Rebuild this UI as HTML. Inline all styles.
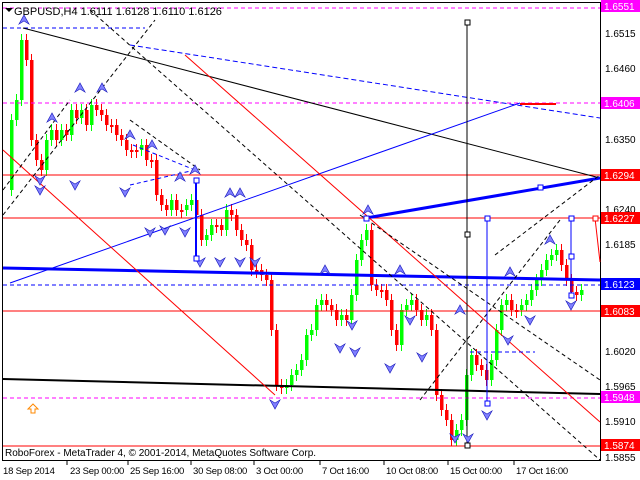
<!DOCTYPE html>
<html><head><style>
body{margin:0;background:#fff;width:640px;height:480px;overflow:hidden}
svg{display:block;font-family:"Liberation Sans",sans-serif}
</style></head><body>
<svg id="s" width="640" height="480" xmlns="http://www.w3.org/2000/svg">
<rect width="640" height="480" fill="#fff"/>
<rect x="2.5" y="2.5" width="598" height="458" fill="none" stroke="#000"/>
<g id="c"></g>
<g stroke-width="1">
<line x1="3" y1="8" x2="600" y2="8" stroke="#f0f" stroke-dasharray="4,3"/>
<line x1="3" y1="103" x2="600" y2="103" stroke="#f0f" stroke-dasharray="4,3"/>
<line x1="3" y1="398" x2="600" y2="398" stroke="#f0f" stroke-dasharray="4,3"/>
<line x1="3" y1="175" x2="600" y2="175" stroke="#f00"/>
<line x1="3" y1="218" x2="600" y2="218" stroke="#f00"/>
<line x1="3" y1="311" x2="600" y2="311" stroke="#f00"/>
<line x1="3" y1="446" x2="600" y2="446" stroke="#f00"/>
<line x1="3" y1="285" x2="600" y2="285" stroke="#00f" stroke-dasharray="4,3"/>
<line x1="3" y1="28" x2="145" y2="28" stroke="#00f" stroke-dasharray="4,3"/>
<line x1="520" y1="104" x2="556" y2="104" stroke="#f00" stroke-width="2"/>
</g>
<line x1="3" y1="268" x2="600" y2="280" stroke="#00f" stroke-width="3"/>
<line x1="3" y1="379" x2="600" y2="394" stroke="#000" stroke-width="2"/>
<line x1="23" y1="28" x2="600" y2="178" stroke="#000"/>
<line x1="130" y1="45" x2="600" y2="118" stroke="#00f" stroke-dasharray="5,3"/>
<line x1="10" y1="283" x2="520" y2="103" stroke="#00f"/>
<line x1="366" y1="218" x2="600" y2="178" stroke="#00f" stroke-width="3"/>
<line x1="185" y1="55" x2="600" y2="422" stroke="#f00"/>
<line x1="3" y1="150" x2="275" y2="395" stroke="#f00"/>
<g stroke="#000" stroke-dasharray="4,3" fill="none">
<line x1="3" y1="215" x2="155" y2="20"/>
<line x1="3" y1="190" x2="70" y2="100"/>
<line x1="90" y1="10" x2="600" y2="460"/>
<line x1="360" y1="215" x2="600" y2="380"/>
<line x1="420" y1="400" x2="560" y2="220"/>
<line x1="495" y1="255" x2="600" y2="175"/>
<line x1="130" y1="120" x2="200" y2="170"/>
</g>
<g stroke="#00f" stroke-dasharray="4,3"><line x1="130" y1="185" x2="195" y2="170"/><line x1="133" y1="145" x2="195" y2="170"/><line x1="470" y1="352" x2="535" y2="352"/></g>
<line x1="467" y1="22" x2="467" y2="445" stroke="#000"/>
<line x1="487" y1="218" x2="487" y2="403" stroke="#00f"/>
<line x1="571" y1="218" x2="571" y2="295" stroke="#00f"/>
<line x1="595" y1="218" x2="600" y2="262" stroke="#f00"/>
<line x1="196" y1="178" x2="196" y2="260" stroke="#00f" stroke-width="2"/>
<g id="f"></g>
<g fill="#fff" stroke-width="1">
<rect x="465" y="20" width="5" height="5" stroke="#000"/><rect x="465" y="232" width="5" height="5" stroke="#000"/>
<rect x="465" y="443" width="5" height="5" stroke="#000"/>
<rect x="485" y="216" width="5" height="5" stroke="#00f"/><rect x="485" y="401" width="5" height="5" stroke="#00f"/>
<rect x="569" y="216" width="5" height="5" stroke="#00f"/><rect x="569" y="254" width="5" height="5" stroke="#00f"/>
<rect x="569" y="293" width="5" height="5" stroke="#00f"/><rect x="593" y="216" width="5" height="5" stroke="#f00"/>
<rect x="538" y="185" width="5" height="5" stroke="#00f"/><rect x="194" y="178" width="5" height="5" stroke="#00f"/>
<rect x="194" y="256" width="5" height="5" stroke="#00f"/><rect x="364" y="216" width="5" height="5" stroke="#00f"/>
</g>
<text x="14" y="15" font-size="11" fill="#000">GBPUSD,H4  1.6111 1.6128 1.6110 1.6126</text>
<polygon points="5,8 13,8 9,12" fill="#000"/>
<text x="5" y="456" font-size="10" fill="#000">RoboForex - MetaTrader 4, © 2001-2014, MetaQuotes Software Corp.</text>
<path d="M33,404 l-5,5 h3 v4 h4 v-4 h3 z" fill="none" stroke="#f80"/>
<g font-size="10" fill="#000">
<text x="605" y="37">1.6515</text><text x="605" y="72">1.6460</text><text x="605" y="143">1.6350</text>
<text x="605" y="213">1.6240</text><text x="605" y="248">1.6185</text><text x="605" y="355">1.6020</text>
<text x="605" y="390">1.5965</text><text x="605" y="425">1.5910</text><text x="605" y="461">1.5855</text>
</g>
<g font-size="10">
<rect x="601" y="0" width="39" height="12" fill="#f0f"/><text x="604" y="10" fill="#fff">1.6551</text>
<rect x="601" y="97" width="39" height="12" fill="#f0f"/><text x="604" y="107" fill="#fff">1.6406</text>
<rect x="601" y="169" width="39" height="12" fill="#f00"/><text x="604" y="179" fill="#fff">1.6294</text>
<rect x="601" y="212" width="39" height="12" fill="#f00"/><text x="604" y="222" fill="#fff">1.6227</text>
<rect x="601" y="278" width="39" height="12" fill="#00f"/><text x="604" y="288" fill="#fff">1.6123</text>
<rect x="601" y="305" width="39" height="12" fill="#f00"/><text x="604" y="315" fill="#fff">1.6083</text>
<rect x="601" y="391" width="39" height="12" fill="#f0f"/><text x="604" y="401" fill="#fff">1.5948</text>
<rect x="601" y="439" width="39" height="12" fill="#f00"/><text x="604" y="449" fill="#fff">1.5874</text>
</g>
<g font-size="9.5" fill="#000" letter-spacing="-0.2">
<text x="3" y="474">18 Sep 2014</text><text x="70" y="474">23 Sep 00:00</text><text x="130" y="474">25 Sep 16:00</text>
<text x="193" y="474">30 Sep 08:00</text><text x="256" y="474">3 Oct 00:00</text><text x="322" y="474">7 Oct 16:00</text>
<text x="386" y="474">10 Oct 08:00</text><text x="450" y="474">15 Oct 00:00</text><text x="516" y="474">17 Oct 16:00</text>
</g>
<g stroke="#000"><line x1="67" y1="461" x2="67" y2="465"/><line x1="128" y1="461" x2="128" y2="465"/><line x1="191" y1="461" x2="191" y2="465"/><line x1="254" y1="461" x2="254" y2="465"/><line x1="320" y1="461" x2="320" y2="465"/><line x1="384" y1="461" x2="384" y2="465"/><line x1="448" y1="461" x2="448" y2="465"/><line x1="514" y1="461" x2="514" y2="465"/></g>
</svg>
<script>
var NS="http://www.w3.org/2000/svg";
function el(p,n,a){var e=document.createElementNS(NS,n);for(var k in a)e.setAttribute(k,a[k]);p.appendChild(e);}
var pts=[[5,190],[10,120],[15,100],[20,40],[25,60],[30,140],[35,160],[40,170],[45,140],[50,130],[55,140],[60,130],[65,135],[70,110],[75,118],[80,110],[85,125],[90,105],[95,110],[100,115],[105,125],[110,125],[115,135],[120,140],[125,150],[130,150],[135,150],[140,145],[145,160],[150,160],[155,195],[160,205],[165,210],[170,200],[175,210],[180,210],[185,205],[190,200],[195,215],[200,240],[205,235],[210,225],[215,225],[220,230],[225,210],[230,215],[235,230],[240,240],[245,245],[250,270],[255,270],[260,275],[265,280],[270,330],[275,385],[280,388],[285,385],[290,375],[295,370],[300,360],[305,335],[310,330],[315,305],[320,300],[325,305],[330,310],[335,320],[340,315],[345,320],[350,295],[355,260],[360,240],[365,230],[370,285],[375,290],[380,290],[385,300],[390,330],[395,345],[400,310],[405,305],[410,300],[415,310],[420,320],[425,315],[430,330],[435,395],[440,410],[445,420],[450,440],[455,430],[460,420],[465,375],[470,355],[475,365],[480,370],[485,380],[490,360],[495,330],[500,305],[505,300],[510,310],[515,310],[520,305],[525,300],[530,290],[535,280],[540,270],[545,260],[550,255],[555,250],[560,265],[565,280],[570,292],[575,295],[580,290]];
var g=document.getElementById('c'),prev=pts[0][1];
for(var i=1;i<pts.length;i++){var x=pts[i][0],y=pts[i][1],o=prev,c=y;var up=c<o;var t=Math.min(o,c),b=Math.max(o,c);if(b-t<2)b=t+2;var col=up?'#0f0':'#f00';
el(g,'line',{x1:x+1.5,y1:t-6,x2:x+1.5,y2:b+6,stroke:col});el(g,'rect',{x:x,y:t,width:3.5,height:b-t,fill:col});prev=c;}
var fr=[[24,20,1],[80,88,1],[102,88,1],[52,118,1],[130,135,1],[152,145,1],[195,170,1],[180,177,1],[230,193,1],[240,193,1],[368,210,1],[510,272,1],[550,240,1],[325,270,1],[40,180,0],[75,185,0],[40,190,0],[125,192,0],[165,230,0],[200,262,0],[240,262,0],[275,404,0],[340,348,0],[355,352,0],[422,357,0],[390,368,0],[455,438,0],[468,438,0],[487,415,0],[530,320,0],[508,340,0],[571,305,0],[150,232,0],[185,232,0],[220,262,0],[255,262,0],[460,310,1],[400,270,1],[352,325,0],[410,320,0]];
var f=document.getElementById('f');
fr.forEach(function(a){var x=a[0],y=a[1],d;if(a[2])d='M'+(x-5)+','+(y+4)+' L'+x+','+(y-5)+' L'+(x+5)+','+(y+4)+' L'+x+','+(y+1)+'Z';else d='M'+(x-5)+','+(y-4)+' L'+x+','+(y+5)+' L'+(x+5)+','+(y-4)+' L'+x+','+(y-1)+'Z';el(f,'path',{d:d,fill:'#8080ff',stroke:'#2020c0','stroke-width':0.7});});
</script>
</body></html>
